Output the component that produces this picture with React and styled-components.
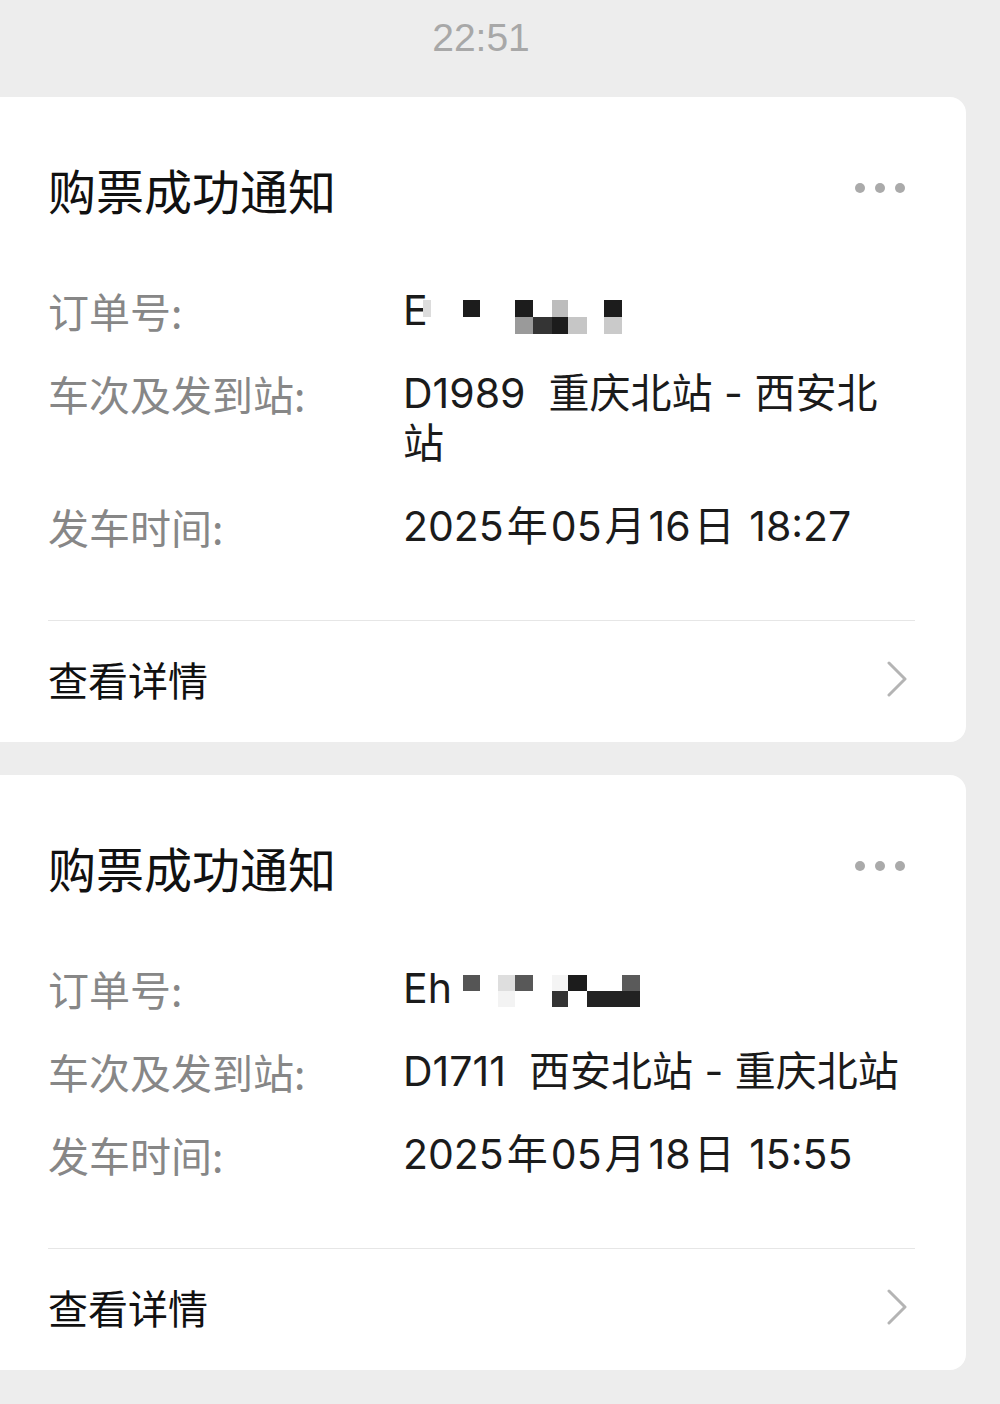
import React from 'react'
import styled, { createGlobalStyle } from 'styled-components'

const GlobalStyle = createGlobalStyle`
  html, body {
    margin: 0;
    padding: 0;
    background: #ededed;
  }
  body {
    font-family: Inter, "Noto Sans CJK SC", sans-serif;
    -webkit-font-smoothing: antialiased;
  }
`

const Page = styled.div`
  width: 1000px;
  min-height: 1404px;
  background: #ededed;
  overflow: hidden;
`

const TimeBar = styled.div`
  width: 962px;
  padding: 18px 0 40px;
  text-align: center;
  font-family: "Liberation Sans", Arial, sans-serif;
  font-size: 39px;
  line-height: 39px;
  color: #a8a8a8;
`

const CardList = styled.div`
  display: flex;
  flex-direction: column;
  gap: 33px;
`

const Card = styled.div`
  width: 966px;
  box-sizing: border-box;
  padding: 0 51px 0 48px;
  background: #ffffff;
  border-radius: 0 16px 16px 0;
`

const Header = styled.div`
  display: flex;
  align-items: center;
  justify-content: space-between;
  padding-top: 59px;
`

const Title = styled.div`
  font-family: "Noto Sans CJK SC", sans-serif;
  font-size: 48px;
  line-height: 66px;
  color: #111111;
`

const Dots = styled.div`
  display: flex;
  gap: 10px;
  margin: -2px 10px 0 0;

  span {
    width: 10px;
    height: 10px;
    border-radius: 50%;
    background: #aaaaaa;
  }
`

const Rows = styled.div`
  display: flex;
  flex-direction: column;
  gap: 33px;
  padding: 63px 0 69px;
`

const Row = styled.div`
  display: grid;
  grid-template-columns: 355px 512px;
  font-size: 41px;
  line-height: 50px;
`

const Label = styled.div`
  color: #878787;
  font-family: "Noto Sans CJK SC", sans-serif;
`

const Value = styled.div`
  position: relative;
  color: #1b1b1b;
  white-space: pre-wrap;
`

const Unit = styled.span`
  margin: 0 ${(props) => props.gap}px;
`

const Mosaic = styled.svg`
  position: absolute;
  left: 0;
  top: 0;
`

const Footer = styled.div`
  display: flex;
  align-items: center;
  justify-content: space-between;
  box-sizing: border-box;
  height: 122px;
  padding-bottom: 6px;
  border-top: 1px solid #e6e6e6;
`

const FooterText = styled.div`
  font-family: "Noto Sans CJK SC", sans-serif;
  font-size: 40px;
  color: #111111;
`

const Chevron = styled.svg`
  margin-right: 7px;
`

const mosaics = {
  first: [
    [20, 15, 8, 17, '#dcdcdc'],
    [60, 15, 17, 17, '#1c1c1c'],
    [112, 15, 18, 17, '#1c1c1c'],
    [149, 15, 16, 17, '#bdbdbd'],
    [112, 32, 18, 17, '#9a9a9a'],
    [130, 32, 19, 17, '#343434'],
    [149, 32, 16, 17, '#1c1c1c'],
    [165, 32, 19, 17, '#c6c6c6'],
    [201, 15, 18, 17, '#1c1c1c'],
    [201, 32, 18, 17, '#cacaca'],
  ],
  second: [
    [60, 12, 17, 16, '#555555'],
    [95, 12, 17, 16, '#dedede'],
    [112, 12, 18, 16, '#585858'],
    [95, 28, 17, 16, '#f3f3f3'],
    [149, 12, 16, 16, '#f4f4f4'],
    [165, 12, 19, 16, '#1c1c1c'],
    [219, 12, 18, 16, '#5a5a5a'],
    [149, 28, 16, 16, '#333333'],
    [184, 28, 53, 16, '#222222'],
  ],
}

const Redacted = ({ cells }) => (
  <Mosaic width="260" height="50" viewBox="0 0 260 50">
    {cells.map(([x, y, w, h, fill], i) => (
      <rect key={i} x={x} y={y} width={w} height={h} fill={fill} />
    ))}
  </Mosaic>
)

const DepartTime = ({ date, clock }) => (
  <>
    {date[0]}
    <Unit gap={3}>年</Unit>
    {date[1]}
    <Unit gap={3}>月</Unit>
    {date[2]}
    <Unit gap={3}>日</Unit> {clock}
  </>
)

const tickets = [
  {
    prefix: 'E',
    mosaic: mosaics.first,
    train: 'D1989  重庆北站 - 西安北站',
    date: ['2025', '05', '16'],
    clock: '18:27',
  },
  {
    prefix: 'Eh',
    mosaic: mosaics.second,
    train: 'D1711  西安北站 - 重庆北站',
    date: ['2025', '05', '18'],
    clock: '15:55',
  },
]

const TicketCard = ({ ticket }) => (
  <Card>
    <Header>
      <Title>购票成功通知</Title>
      <Dots>
        <span />
        <span />
        <span />
      </Dots>
    </Header>
    <Rows>
      <Row>
        <Label>订单号:</Label>
        <Value>
          {ticket.prefix}
          <Redacted cells={ticket.mosaic} />
        </Value>
      </Row>
      <Row>
        <Label>车次及发到站:</Label>
        <Value>{ticket.train}</Value>
      </Row>
      <Row>
        <Label>发车时间:</Label>
        <Value>
          <DepartTime date={ticket.date} clock={ticket.clock} />
        </Value>
      </Row>
    </Rows>
    <Footer>
      <FooterText>查看详情</FooterText>
      <Chevron width="22" height="36" viewBox="0 0 22 36">
        <polyline
          points="3,2 19,18 3,34"
          fill="none"
          stroke="#b4b4b4"
          strokeWidth="3"
          strokeLinecap="round"
          strokeLinejoin="round"
        />
      </Chevron>
    </Footer>
  </Card>
)

const App = () => (
  <Page>
    <GlobalStyle />
    <TimeBar>22:51</TimeBar>
    <CardList>
      {tickets.map((t) => (
        <TicketCard key={t.train} ticket={t} />
      ))}
    </CardList>
  </Page>
)

export default App
